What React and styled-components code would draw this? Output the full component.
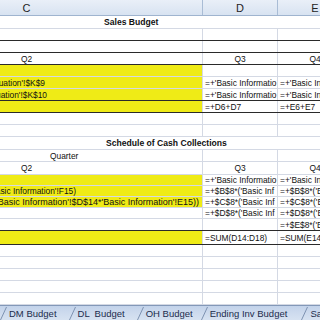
import React from 'react';
import styled, { createGlobalStyle } from 'styled-components';

const GlobalStyle = createGlobalStyle`
  html, body {
    margin: 0;
    padding: 0;
    background: #ffffff;
  }
  body {
    font-family: "Liberation Sans", Arial, sans-serif;
  }
`;

// column C starts off-screen to the left, so the sheet is wider than the window
const COLS = '352px 75px 75px';
const GRID = '#d4d9e4';
const YELLOW = '#efeb16';

const Window = styled.div`
  width: 320px;
  height: 320px;
  overflow: hidden;
  background: #ffffff;
  display: flex;
  flex-direction: column;
  font-family: "Liberation Sans", Arial, sans-serif;
`;

const Sheet = styled.div`
  flex: 1;
  width: 502px;
  margin-left: -149px;
  display: flex;
  flex-direction: column;
  overflow: hidden;
`;

const ColumnHeader = styled.div`
  display: grid;
  grid-template-columns: ${COLS};
  height: 16px;
  box-sizing: border-box;
  background: linear-gradient(#e9eff8, #d8e3f1);
  border-bottom: 1px solid #9fb4cf;
`;

const HeaderCell = styled.div`
  display: flex;
  align-items: center;
  justify-content: center;
  border-right: 1px solid #a9bcd5;
  font-size: 11px;
  color: #232323;
`;

const Row = styled.div`
  display: grid;
  grid-template-columns: ${COLS};
  height: ${p => p.$h}px;
  box-sizing: border-box;
  border-bottom: 1px solid ${p => (p.$dark ? '#2a2a2a' : GRID)};
`;

const Cell = styled.div`
  min-width: 0;
  display: flex;
  align-items: center;
  justify-content: ${p => p.$align || 'flex-start'};
  padding: 0 ${p => p.$end ?? 2}px 0 ${p => p.$indent ?? 2}px;
  border-right: 1px solid ${GRID};
  background: ${p => (p.$fill ? YELLOW : 'transparent')};
  overflow: hidden;
  white-space: pre;
  font-size: ${p => p.$size || 8.4}px;
  color: #111111;
`;

const TitleCell = styled.div`
  grid-column: 1 / -1;
  display: flex;
  align-items: center;
  padding-left: ${p => p.$indent}px;
  white-space: pre;
  font-size: 8.6px;
  font-weight: bold;
  color: #111111;
`;

const TabBar = styled.div`
  height: 15px;
  box-sizing: border-box;
  display: flex;
  align-items: stretch;
  background: linear-gradient(#c3d3ea, #d7e2f1);
  border-top: 1px solid #8398b8;
  overflow: hidden;
`;

const Tab = styled.div`
  display: flex;
  align-items: center;
  padding-right: ${p => p.$gap}px;
  white-space: pre;
  font-size: 9.5px;
  color: #1c2c4c;
`;

const Slash = styled.svg`
  flex: none;
  width: 7px;
  height: 14px;
  margin-right: 2px;
`;

const q = (t) => ({ t, align: 'center' });

const rows = [
  { h: 13, title: 'Sales Budget', indent: 253 },
  { h: 12, dark: true },
  { h: 12, dark: true },
  { h: 12, dark: true, cells: [q('Q2'), q('Q3'), q('Q4')] },
  { h: 12, cells: [{ fill: true }, {}, {}] },
  {
    h: 12,
    cells: [
      { fill: true, t: "='Basic Evaluation'!$K$9", align: 'flex-end', end: 157 },
      { t: "=+'Basic Informatio" },
      { t: "=+'Basic Information'!M9" },
    ],
  },
  {
    h: 12,
    dark: true,
    cells: [
      { fill: true, t: "='Basic Evaluation'!$K$10", align: 'flex-end', end: 155 },
      { t: "=+'Basic Informatio" },
      { t: "=+'Basic Information'!M10" },
    ],
  },
  { h: 12, dark: true, cells: [{ fill: true }, { t: '=+D6+D7' }, { t: '=+E6+E7' }] },
  { h: 12 },
  { h: 12 },
  { h: 13, title: 'Schedule of Cash Collections', indent: 255 },
  { h: 12, cells: [{ t: 'Quarter', indent: 199 }, {}, {}] },
  { h: 13, cells: [q('Q2'), q('Q3'), q('Q4')] },
  {
    h: 11,
    cells: [
      { fill: true },
      { t: "=+'Basic Informatio" },
      { t: "=+'Basic Information'!E14" },
    ],
  },
  {
    h: 11,
    cells: [
      { fill: true, t: "=+$A$8*('Basic Information'!F15)", align: 'flex-end', end: 126 },
      { t: "=+$B$8*('Basic Inf" },
      { t: "=+$B$8*('Basic Information'!$E$14)" },
    ],
  },
  {
    h: 11,
    cells: [
      {
        fill: true,
        t: "=+$A$8*('Basic Information'!$D$14*'Basic Information'!E15))",
        align: 'flex-end',
        end: 3,
        size: 9,
      },
      { t: "=+$C$8*('Basic Inf" },
      { t: "=+$C$8*('Basic Information'!$E$14)" },
    ],
  },
  {
    h: 11,
    cells: [
      {},
      { t: "=+$D$8*('Basic Inf" },
      { t: "=+$D$8*('Basic Information'!$E$14)" },
    ],
  },
  { h: 12, dark: true, cells: [{}, {}, { t: "=+$E$8*('Basic Information'!$E$14)" }] },
  { h: 14, dark: true, cells: [{ fill: true }, { t: '=SUM(D14:D18)' }, { t: '=SUM(E14:E18)' }] },
  { h: 12 },
  { h: 12 },
  { h: 12 },
  { h: 12 },
  { h: 12 },
];

const tabs = [
  { name: 'DM Budget', gap: 12 },
  { name: 'DL  Budget', gap: 12 },
  { name: 'OH Budget', gap: 8 },
  { name: 'Ending Inv Budget', gap: 14 },
  { name: 'Sales Budget', gap: 10 },
];

const SheetRow = ({ row }) => {
  if (row.title) {
    return (
      <Row $h={row.h} $dark={row.dark}>
        <TitleCell $indent={row.indent}>{row.title}</TitleCell>
      </Row>
    );
  }
  const cells = row.cells || [{}, {}, {}];
  return (
    <Row $h={row.h} $dark={row.dark}>
      {cells.map((c, i) => (
        <Cell
          key={i}
          $fill={c.fill}
          $align={c.align}
          $end={c.end}
          $indent={c.indent}
          $size={c.size}
        >
          {c.t && <span>{c.t}</span>}
        </Cell>
      ))}
    </Row>
  );
};

const App = () => (
  <>
    <GlobalStyle />
    <Window>
      <Sheet>
        <ColumnHeader>
          <HeaderCell>C</HeaderCell>
          <HeaderCell>D</HeaderCell>
          <HeaderCell>E</HeaderCell>
        </ColumnHeader>
        {rows.map((row, i) => (
          <SheetRow key={i} row={row} />
        ))}
      </Sheet>
      <TabBar>
        {tabs.map(tab => (
          <Tab key={tab.name} $gap={tab.gap}>
            <Slash viewBox="0 0 7 14">
              <path d="M0.5 14 L6.5 1" stroke="#7e92b1" strokeWidth="1" fill="none" />
            </Slash>
            {tab.name}
          </Tab>
        ))}
      </TabBar>
    </Window>
  </>
);

export default App;
